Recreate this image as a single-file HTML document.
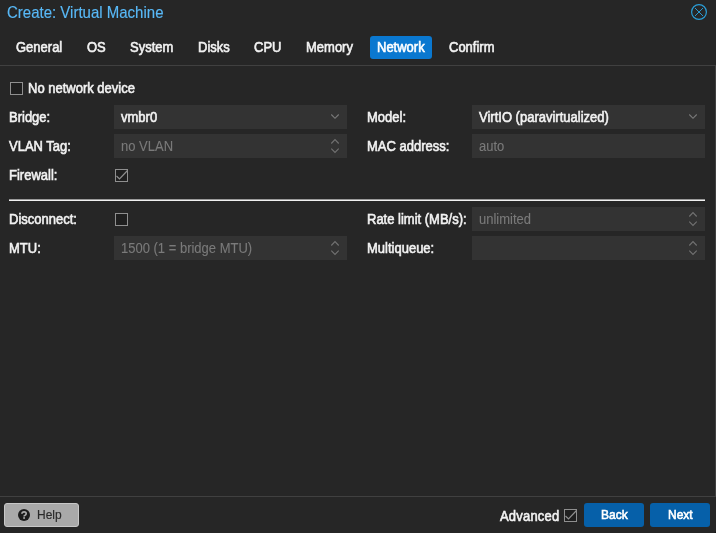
<!DOCTYPE html>
<html><head><meta charset="utf-8">
<style>
html,body{margin:0;padding:0;}
body{width:716px;height:533px;overflow:hidden;background:#262626;position:relative;font-family:"Liberation Sans",sans-serif;font-size:13px;color:#f2f2f2;}
.a{position:absolute;white-space:nowrap;}
.t{display:inline-block;transform:scaleY(1.08);-webkit-text-stroke-width:0.55px;will-change:transform;}
.title{left:7px;top:0.5px;height:24px;line-height:24px;font-size:15px;color:#58b8f6;}
.title .t{-webkit-text-stroke-width:0.15px;}
.tab{top:36px;height:23px;line-height:23px;padding:0 7px;color:#f2f2f2;border-radius:3px;}
.tab.act{background:#0a78d0;color:#fff;}
.tabline{left:0;top:65px;width:716px;height:1px;background:#404040;}
.lbl{height:24px;line-height:26px;}
.fld{height:24px;line-height:26px;background:#333333;padding:0 0 0 7px;box-sizing:border-box;}
.fld.dis{color:#7a7a7a;}
.fld.dis .t{-webkit-text-stroke-width:0.1px;}
.cb{width:13px;height:13px;box-sizing:border-box;border:1px solid #8f8f8f;background:#1f1f1f;}
.sep{left:9px;top:199px;width:696px;height:1px;background:#f0f0f0;border-top:1px solid #9a9a9a;}
.vbr{left:715px;top:65px;width:1px;height:432px;background:#404040;}
.hbr{left:0;top:496px;width:716px;height:1px;background:#404040;}
.btn{top:503px;height:24px;line-height:25px;border-radius:3px;text-align:center;box-sizing:border-box;font-size:12px;}
.blue{background:#0660a9;color:#fff;width:60px;}
.help{left:4px;width:75px;border:1px solid #c8c8c8;background:#a9a9a9;color:#222;line-height:23px;}
.chev{position:absolute;}
</style></head><body>
<div class="a title"><span class="t">Create: Virtual Machine</span></div>
<svg class="a" style="left:690px;top:3px" width="18" height="18" viewBox="0 0 18 18">
  <circle cx="9" cy="9" r="7.4" fill="none" stroke="#2a9dd6" stroke-width="1.2"/>
  <path d="M5 5 L13 13 M13 5 L5 13" stroke="#2a9dd6" stroke-width="0.95"/>
</svg>

<div class="a tab" style="left:9px"><span class="t">General</span></div>
<div class="a tab" style="left:80px"><span class="t">OS</span></div>
<div class="a tab" style="left:123px"><span class="t">System</span></div>
<div class="a tab" style="left:191px"><span class="t">Disks</span></div>
<div class="a tab" style="left:247px"><span class="t">CPU</span></div>
<div class="a tab" style="left:299px"><span class="t">Memory</span></div>
<div class="a tab act" style="left:370px"><span class="t">Network</span></div>
<div class="a tab" style="left:442px"><span class="t">Confirm</span></div>
<div class="a tabline"></div>

<div class="a cb" style="left:10px;top:82px"></div>
<div class="a lbl" style="left:28px;top:76px"><span class="t">No network device</span></div>

<div class="a lbl" style="left:9px;top:105px"><span class="t">Bridge:</span></div>
<div class="a fld" style="left:114px;top:105px;width:233px"><span class="t">vmbr0</span></div>
<svg class="chev" style="left:330px;top:113px" width="10" height="7"><path d="M1.3 1.5 L5 5.3 L8.7 1.5" fill="none" stroke="#7a7a7a" stroke-width="1.1"/></svg>
<div class="a lbl" style="left:367px;top:105px"><span class="t">Model:</span></div>
<div class="a fld" style="left:472px;top:105px;width:233px"><span class="t">VirtIO (paravirtualized)</span></div>
<svg class="chev" style="left:688px;top:113px" width="10" height="7"><path d="M1.3 1.5 L5 5.3 L8.7 1.5" fill="none" stroke="#7a7a7a" stroke-width="1.1"/></svg>

<div class="a lbl" style="left:9px;top:134px"><span class="t">VLAN Tag:</span></div>
<div class="a fld dis" style="left:114px;top:134px;width:233px"><span class="t">no VLAN</span></div>
<svg class="chev" style="left:330px;top:138px" width="10" height="16"><path d="M1.3 5.5 L5 1.6 L8.7 5.5 M1.3 10.6 L5 14.4 L8.7 10.6" fill="none" stroke="#727272" stroke-width="1.1"/></svg>
<div class="a lbl" style="left:367px;top:134px"><span class="t">MAC address:</span></div>
<div class="a fld dis" style="left:472px;top:134px;width:233px"><span class="t">auto</span></div>

<div class="a lbl" style="left:9px;top:163px"><span class="t">Firewall:</span></div>
<div class="a cb" style="left:115px;top:169px"></div>
<svg class="a" style="left:115px;top:169px" width="13" height="13"><path d="M1.5 7 L4.5 10 L12.5 1.5" fill="none" stroke="#8f8f8f" stroke-width="1.2"/></svg>

<div class="a sep"></div>

<div class="a lbl" style="left:9px;top:207px"><span class="t">Disconnect:</span></div>
<div class="a cb" style="left:115px;top:213px"></div>
<div class="a lbl" style="left:367px;top:207px"><span class="t">Rate limit (MB/s):</span></div>
<div class="a fld dis" style="left:472px;top:207px;width:233px"><span class="t">unlimited</span></div>
<svg class="chev" style="left:688px;top:211px" width="10" height="16"><path d="M1.3 5.5 L5 1.6 L8.7 5.5 M1.3 10.6 L5 14.4 L8.7 10.6" fill="none" stroke="#727272" stroke-width="1.1"/></svg>

<div class="a lbl" style="left:9px;top:236px"><span class="t">MTU:</span></div>
<div class="a fld dis" style="left:114px;top:236px;width:233px"><span class="t">1500 (1 = bridge MTU)</span></div>
<svg class="chev" style="left:330px;top:240px" width="10" height="16"><path d="M1.3 5.5 L5 1.6 L8.7 5.5 M1.3 10.6 L5 14.4 L8.7 10.6" fill="none" stroke="#727272" stroke-width="1.1"/></svg>
<div class="a lbl" style="left:367px;top:236px"><span class="t">Multiqueue:</span></div>
<div class="a fld dis" style="left:472px;top:236px;width:233px"></div>
<svg class="chev" style="left:688px;top:240px" width="10" height="16"><path d="M1.3 5.5 L5 1.6 L8.7 5.5 M1.3 10.6 L5 14.4 L8.7 10.6" fill="none" stroke="#727272" stroke-width="1.1"/></svg>

<div class="a vbr"></div>
<div class="a hbr"></div>

<div class="a btn help"></div>
<svg class="a" style="left:18.25px;top:508.9px" width="12" height="12" viewBox="0 0 12 12"><circle cx="6" cy="6" r="6" fill="#1c1c1c"/><path d="M3.9 4.7 Q3.9 2.8 6.1 2.8 Q8.2 2.8 8.2 4.6 Q8.2 5.7 7.1 6.2 Q6.1 6.6 6.1 7.5" fill="none" stroke="#a9a9a9" stroke-width="1.7"/><rect x="5.2" y="8.2" width="1.8" height="1.6" fill="#a9a9a9"/></svg>
<div class="a" style="left:37px;top:503px;height:24px;line-height:25px;font-size:12px;color:#2a2a2a"><span class="t" style="-webkit-text-stroke-width:0.15px">Help</span></div>
<div class="a lbl" style="left:500px;top:504px;letter-spacing:0.2px"><span class="t">Advanced</span></div>
<div class="a cb" style="left:564px;top:509px"></div>
<svg class="a" style="left:564px;top:509px" width="13" height="13"><path d="M1.5 7 L4.5 10 L12.5 1.5" fill="none" stroke="#8f8f8f" stroke-width="1.2"/></svg>
<div class="a btn blue" style="left:584px"><span class="t">Back</span></div>
<div class="a btn blue" style="left:650px"><span class="t">Next</span></div>
<div class="a" style="left:713px;top:530px;width:3px;height:3px;background:radial-gradient(circle at 0 0,transparent 2.5px,#151515 3.5px)"></div>
</body></html>
